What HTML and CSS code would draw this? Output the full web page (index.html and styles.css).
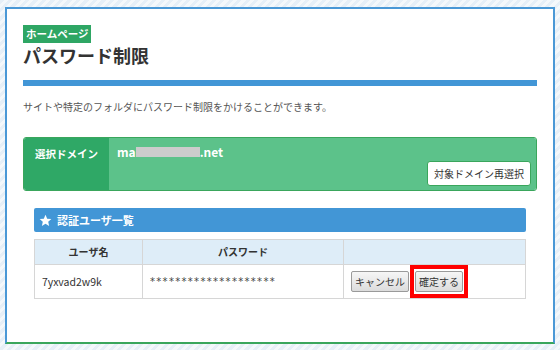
FILE: index.html
```html
<!DOCTYPE html>
<html lang="ja">
<head>
<meta charset="utf-8">
<link rel="stylesheet" href="styles.css">
</head>
<body>
<div class="panel">
  <div class="badge">ホームページ</div>
  <h1 class="title">パスワード制限</h1>
  <div class="bar"></div>
  <p class="desc">サイトや特定のフォルダにパスワード制限をかけることができます。</p>
  <div class="domain">
    <div class="domain-label">選択ドメイン</div>
    <div class="domain-body">
      <div class="domain-name">ma<span class="mask"></span>.net</div>
      <button class="reselect">対象ドメイン再選択</button>
    </div>
  </div>
  <div class="section">
    <div class="section-head">
      <svg class="star" viewBox="0 0 24 24" width="13" height="13"><path d="M12 1.5l3.1 7.1 7.7.7-5.8 5.1 1.7 7.6L12 18l-6.7 4 1.7-7.6-5.8-5.1 7.7-.7z" fill="#fff"/></svg>
      <span>認証ユーザ一覧</span>
    </div>
    <table class="users">
      <colgroup><col class="c1"><col class="c2"><col></colgroup>
      <thead>
        <tr><th>ユーザ名</th><th>パスワード</th><th></th></tr>
      </thead>
      <tbody>
        <tr>
          <td class="user">7yxvad2w9k</td>
          <td class="pw">********************</td>
          <td class="actions"><button class="btn">キャンセル</button><span class="mark"><button class="btn">確定する</button></span></td>
        </tr>
      </tbody>
    </table>
  </div>
</div>
</body>
</html>
```

FILE: styles.css
```css
html, body {
  margin: 0;
  padding: 0;
}
body {
  width: 560px;
  height: 350px;
  overflow: hidden;
  font-family: "Noto Sans CJK JP", "Noto Sans", sans-serif;
  background: repeating-linear-gradient(135deg, #e6eff7 0 3px, #f4f8fb 3px 6px);
  padding: 7px 0 0 5px;
  box-sizing: border-box;
}
.panel {
  box-sizing: border-box;
  width: 550px;
  height: 337px;
  background: #fff;
  border: 2px solid #4a98d6;
  border-bottom-color: #3aa65c;
  padding: 16px 16px;
}
.badge {
  width: max-content;
  height: 18px;
  line-height: 18px;
  padding: 0 3px;
  background: #2ea664;
  color: #fff;
  font-size: 10.5px;
  font-weight: bold;
}
.title {
  margin: 1px 0 0;
  font-size: 18px;
  line-height: 22px;
  font-weight: bold;
  color: #333;
}
.bar {
  margin-top: 14px;
  height: 6px;
  background: #4296d6;
}
.desc {
  margin: 13px 0 0;
  font-size: 10px;
  line-height: 16px;
  color: #555;
}
.domain {
  margin-top: 22px;
  height: 54px;
  display: flex;
  border: 1px solid #3aa65c;
  border-radius: 3px;
  overflow: hidden;
  box-sizing: border-box;
}
.domain-label {
  width: 85px;
  background: #2fa866;
  color: #fff;
  font-size: 10.5px;
  font-weight: bold;
  padding: 8px 0 0 11px;
  box-sizing: border-box;
  line-height: 16px;
}
.domain-body {
  flex: 1;
  background: #5cc28a;
  display: flex;
  flex-direction: column;
  align-items: flex-start;
  padding: 6px 5px 4px 8px;
}
.domain-name {
  color: #fff;
  font-weight: bold;
  font-size: 12px;
  line-height: 16px;
  display: flex;
  align-items: center;
}
.mask {
  display: inline-block;
  width: 64px;
  height: 10px;
  background: #cccccc;
}
.reselect {
  margin-top: auto;
  align-self: flex-end;
  height: 25px;
  padding: 0 6px;
  background: #fff;
  border: 1px solid #3aa65c;
  border-radius: 3px;
  font-family: inherit;
  font-size: 10px;
  color: #333;
}
.section {
  margin: 17px 11px 0;
}
.section-head {
  height: 24px;
  background: #4296d6;
  border-radius: 2px;
  display: flex;
  align-items: center;
  padding-left: 5px;
  color: #fff;
  font-size: 11px;
  font-weight: bold;
  gap: 5px;
}
.star {
  display: block;
}
.users {
  margin-top: 7px;
  width: 100%;
  border-collapse: collapse;
  table-layout: fixed;
  font-size: 10px;
  color: #333;
}
.c1 { width: 108px; }
.c2 { width: 201px; }
.users th, .users td {
  border: 1px solid #d6d6d6;
  padding: 0 7px;
  line-height: 14px;
}
.users th {
  background: #deedf8;
  height: 24px;
  font-weight: bold;
  text-align: center;
}
.users td {
  height: 33px;
  text-align: left;
}
.user {
  font-size: 10.5px;
}
.pw {
  font-family: "DejaVu Sans", sans-serif;
  font-size: 10px;
  letter-spacing: 1.3px;
  color: #444;
}
.actions {
  white-space: nowrap;
  font-size: 0;
}
.btn {
  height: 21px;
  padding: 0 3px;
  font-family: "Noto Sans CJK JP", sans-serif;
  font-size: 10px;
  color: #333;
  background: linear-gradient(#f6f6f6, #dcdcdc);
  border: 1px solid #9a9a9a;
  border-radius: 2px;
  vertical-align: middle;
}
.mark {
  display: inline-block;
  border: 4px solid #ff0000;
  padding: 2px 1px;
  margin-left: 1px;
  vertical-align: middle;
}
.mark .btn {
  display: block;
}
```
